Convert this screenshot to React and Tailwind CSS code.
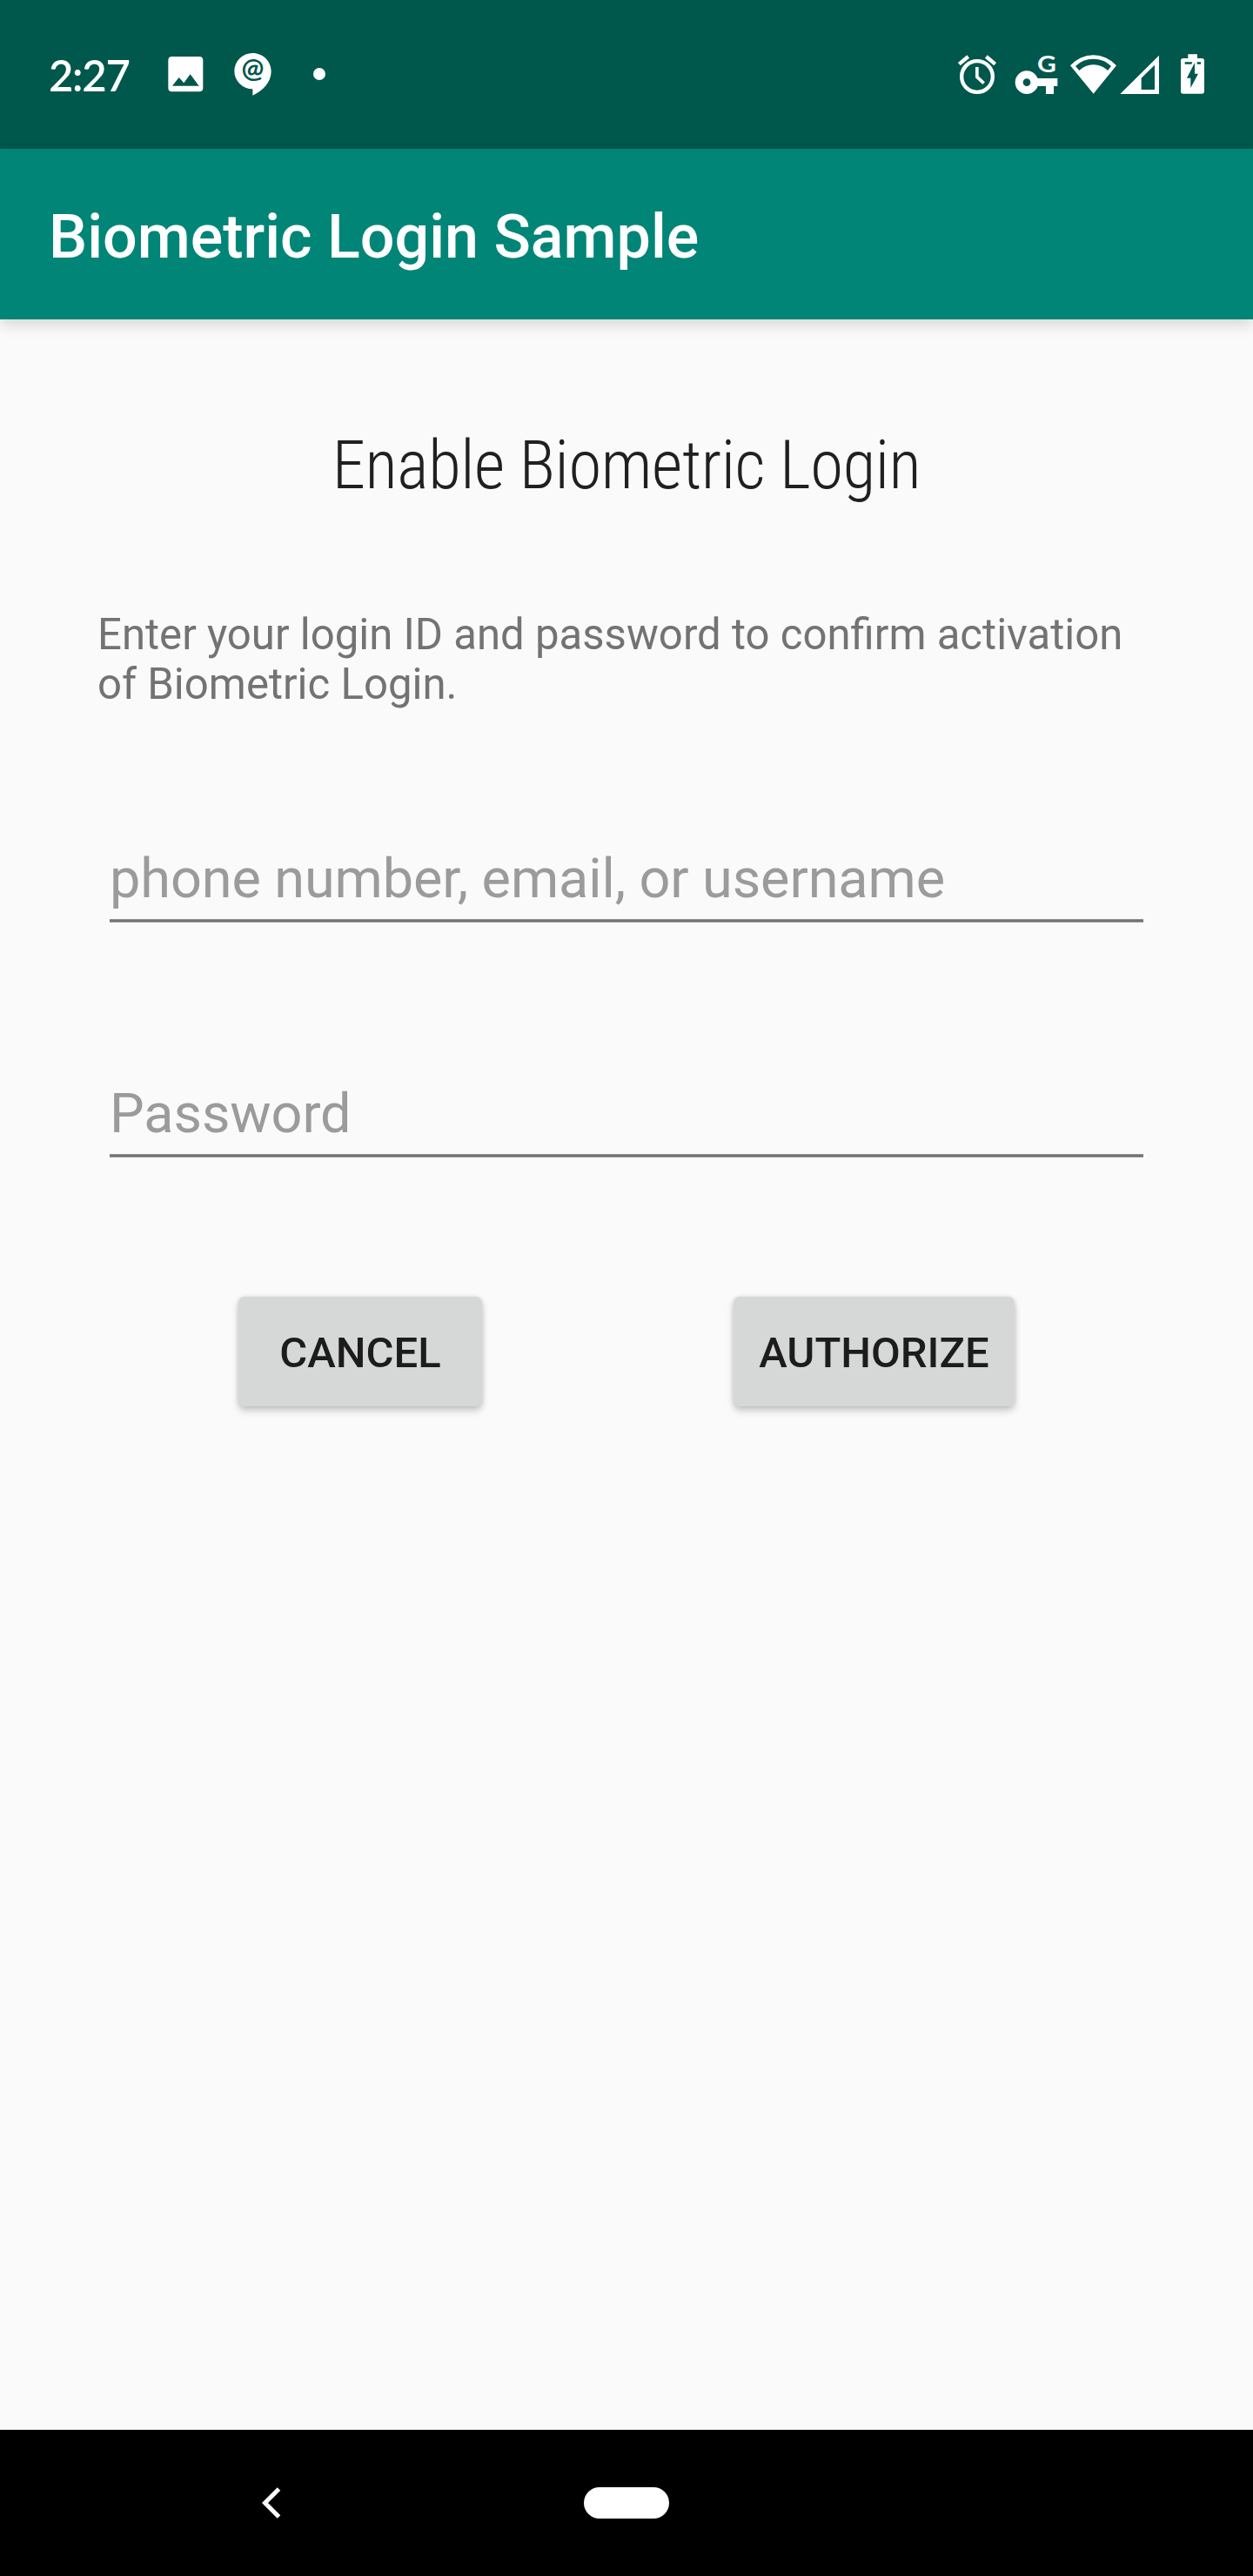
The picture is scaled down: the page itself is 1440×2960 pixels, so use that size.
import React from "react";

function ImageIcon() {
  return (
    <svg className="ml-[44px] h-[50px] w-[43px]" viewBox="456 60 129 150" fill="#fff">
      <path fillRule="evenodd" d="M473 75H567Q580 75 580 88V183Q580 196 567 196H473Q460 196 460 183V88Q460 75 473 75ZM474 176H566L536 136L514 166L497 147Z" />
    </svg>
  );
}

function HangoutsIcon() {
  return (
    <svg className="ml-[33px] h-[50px] w-[45px]" viewBox="684 60 135 150">
      <path fill="#fff" d="M751 63C786 63 815 91 815 126C815 165 785 193 751 209V187A63 62 0 0 1 688 125A63 62 0 0 1 751 63Z" />
      <text x="751" y="147" textAnchor="middle" fontFamily="Lato" fontWeight="700" fontSize="92" fill="#00574b">@</text>
    </svg>
  );
}

function AlarmIcon() {
  return (
    <svg className="h-[50px] w-[47px]" viewBox="60 60 141 150" fill="none" stroke="#fff">
      <circle cx="129" cy="144" r="53.5" strokeWidth="13" />
      <path strokeWidth="11" d="M128.500 111V145L152 167" />
      <path strokeWidth="13" d="M67 101L98 75M160 75L191 101" />
    </svg>
  );
}

function KeyIcon() {
  return (
    <svg className="ml-[18px] h-[50px] w-[53px] overflow-visible" viewBox="255 60 159 150">
      <circle cx="300" cy="164" r="26.500" fill="none" stroke="#fff" strokeWidth="27" />
      <path fill="#fff" d="M333 150H406V177H393V204H366V177H333Z" />
      <text transform="translate(369 127.500) scale(1.1 1)" textAnchor="middle" fontFamily="Lato" fontWeight="700" fontSize="82" fill="#fff">G</text>
    </svg>
  );
}

function WifiIcon() {
  return (
    <svg className="ml-[11px] h-[50px] w-[56px]" viewBox="447 60 168 150" fill="#fff">
      <path fillRule="evenodd" d="M530 203L450 106A106 106 0 0 1 609 106ZM468 108L481 123A70 70 0 0 1 579 123L591 108A88 88 0 0 0 468 108Z" />
    </svg>
  );
}

function SignalIcon() {
  return (
    <svg className="ml-[2px] h-[50px] w-[46px]" viewBox="621 60 138 150" fill="#fff">
      <path fillRule="evenodd" d="M622 204L756 71V204ZM695 149V189H741V104Z" />
    </svg>
  );
}

function BatteryIcon() {
  return (
    <svg className="ml-[23px] h-[50px] w-[30px]" viewBox="828 60 90 150">
      <path fill="#fff" d="M856 67H888V81H904Q912 81 912 89V195Q912 203 904 203H839Q831 203 831 195V89Q831 81 839 81H856Z" />
      <path fill="#00574b" d="M845 94H871L868 101H845ZM887 94H900V101H887ZM879 96V134H891L865 183V149H852Z" />
    </svg>
  );
}

function StatusBar() {
  return (
    <div className="flex h-[171px] items-start bg-[#00574b] pt-[60px] pr-[54px] pl-[56px]">
      <span className="h-[50px] w-[92px] font-['Lato'] text-[49px] leading-[52px] font-semibold tracking-[-1.3px] whitespace-nowrap text-white">2:27</span>
      <ImageIcon />
      <HangoutsIcon />
      <span className="mt-[18px] ml-[47px] size-[14px] rounded-full bg-white" />
      <div className="ml-auto flex">
        <AlarmIcon />
        <KeyIcon />
        <WifiIcon />
        <SignalIcon />
        <BatteryIcon />
      </div>
    </div>
  );
}

function Field({ label, type, className }) {
  return (
    <input
      type={type}
      placeholder={label}
      aria-label={label}
      className={`block h-[103px] w-full border-b-2 border-[#737373] bg-transparent pt-[5px] text-[63px] leading-[74px] tracking-[-0.1px] shadow-[0_1px_0_#929292,inset_0_-1px_0_#929292] outline-none placeholder:text-[#9b9b9b] placeholder:opacity-100 ${className}`}
    />
  );
}

function Button({ children, className }) {
  return (
    <button
      className={`h-[126px] rounded-[7px] bg-[#d6d8d7] pt-[4px] text-[49px] leading-[58px] font-medium whitespace-nowrap text-[#1c1c1c] shadow-[0_5px_9px_rgba(0,0,0,0.2),0_0px_5px_rgba(0,0,0,0.1)] ${className}`}
    >
      {children}
    </button>
  );
}

export default function App() {
  return (
    <div className="flex h-[2960px] w-[1440px] flex-col overflow-hidden bg-[#fafafa] font-['Roboto',sans-serif]">
      <StatusBar />
      <header className="flex h-[196px] items-center bg-[#008577] px-[56px] pt-[6px] shadow-[0_6px_16px_rgba(0,0,0,0.15)]">
        <h1 className="text-[70px] leading-[82px] font-medium whitespace-nowrap text-white">Biometric Login Sample</h1>
      </header>
      <main className="flex-1">
        <h2 className="mt-[123px] h-[90px] text-center text-[77px] leading-[90px] font-light tracking-[-0.43px] [font-stretch:75%] whitespace-nowrap text-[#202020]">Enable Biometric Login</h2>
        <p className="mt-[121px] ml-[112px] w-[1216px] text-[49.12px] leading-[57px] text-[#737373]">
          Enter your login ID and password to confirm activation of Biometric Login.
        </p>
        <form className="mx-[126px] mt-[141px]">
          <Field type="text" label="phone number, email, or username" className="" />
          <Field type="password" label="Password" className="mt-[167px]" />
        </form>
        <div className="mt-[161px] flex pl-[274px]">
          <Button className="w-[280px]">CANCEL</Button>
          <Button className="ml-[289px] w-[323px]">AUTHORIZE</Button>
        </div>
      </main>
      <nav className="flex h-[168px] items-center bg-black pl-[301px]">
        <svg className="h-[36px] w-[22px]" viewBox="0 0 22 36" fill="none" stroke="#fff" strokeWidth="5">
          <path d="M19.500 2L3.500 18L19.500 34" />
        </svg>
        <span className="ml-[348px] h-[36px] w-[98px] rounded-full bg-white" />
      </nav>
    </div>
  );
}
